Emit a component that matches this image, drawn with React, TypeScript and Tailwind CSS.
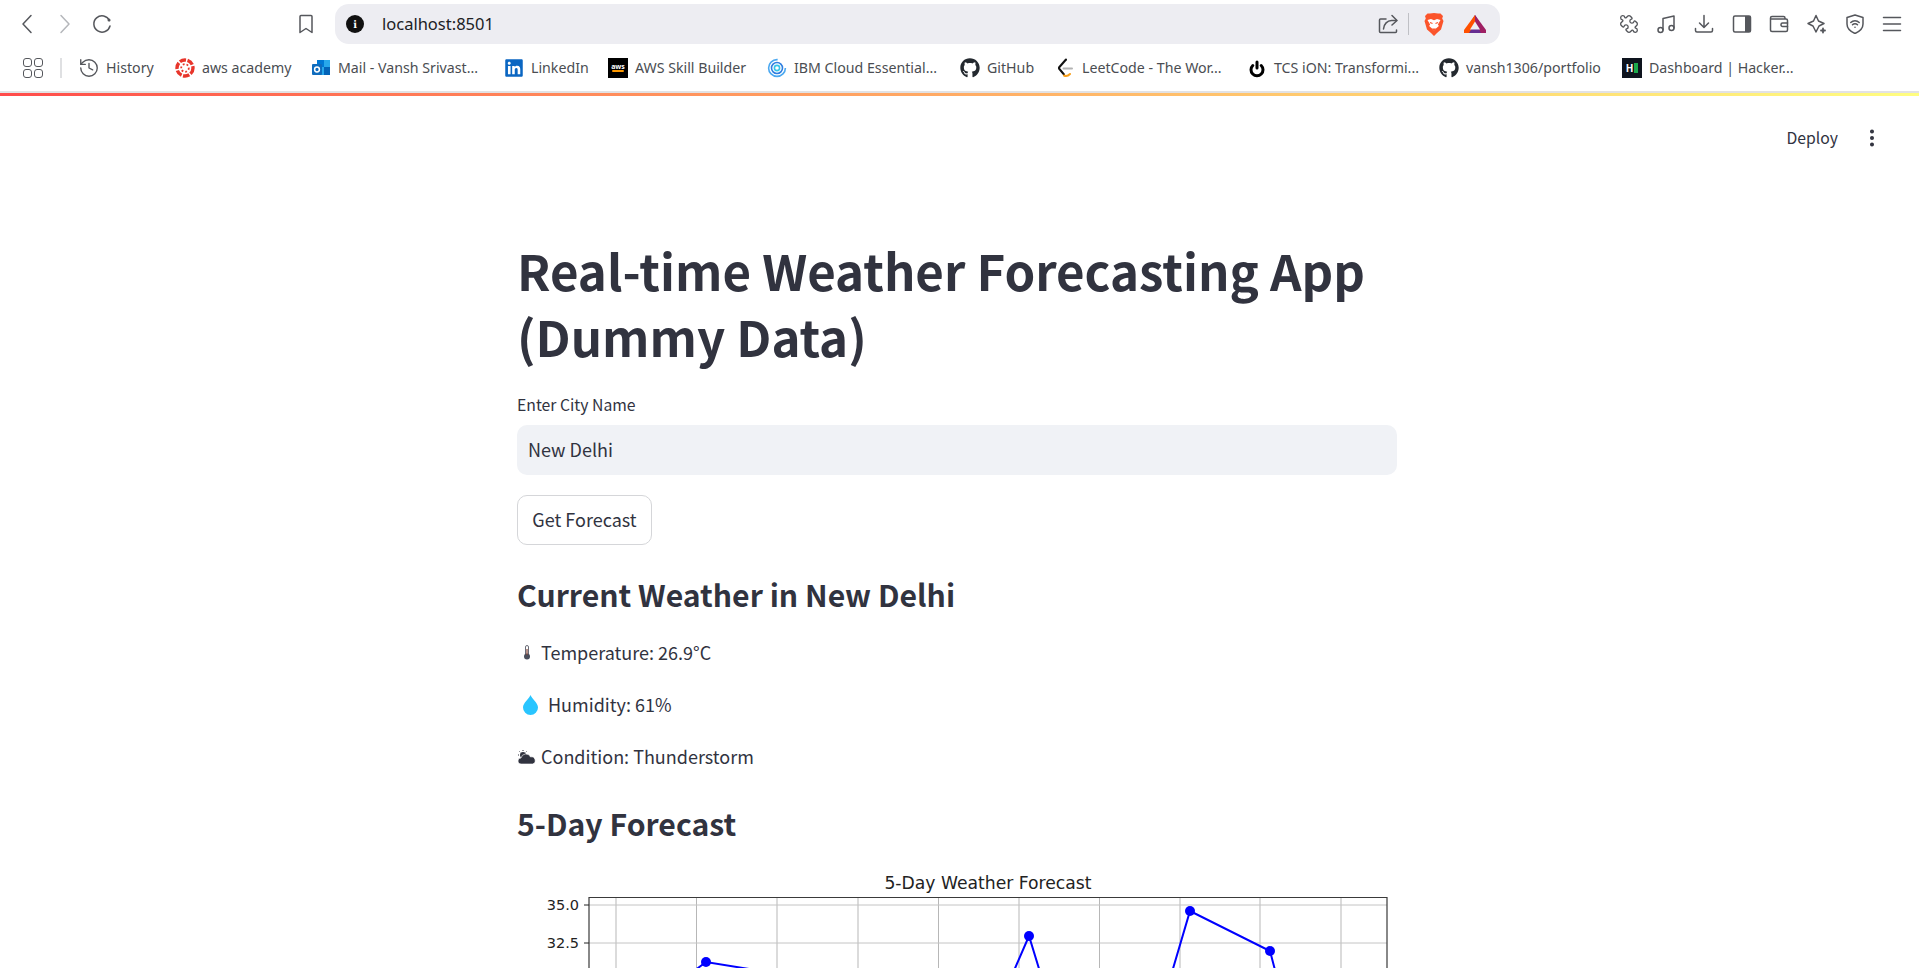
import { ReactNode } from "react";
import { EllipsisVertical, History, Puzzle } from "lucide-react";
import { FaGithub, FaLinkedin } from "react-icons/fa";

const chromeFont = "font-['Noto_Sans',sans-serif]";
const iconProps = { fill: "none", stroke: "currentColor", strokeWidth: 1.5, strokeLinecap: "round", strokeLinejoin: "round" } as const;

const BookmarkLink = ({ icon, label, width }: { icon: ReactNode; label: string; width: string }) => (
  <div className={`flex shrink-0 items-center gap-[7px] ${width}`}>
    <span className="flex h-5 w-5 shrink-0 items-center justify-center">{icon}</span>
    <span className="whitespace-nowrap text-[14.2px] text-[#4a4d52]">{label}</span>
  </div>
);

const AwsBox = () => (
  <span className="flex h-5 w-5 flex-col items-center justify-center bg-black text-[7px] font-bold leading-[8px] text-white">
    aws
    <span className="mt-[-1px] h-[2px] w-3 rounded-full bg-[#f90]" />
  </span>
);

const CanvasLogo = () => (
  <svg viewBox="0 0 20 20" className="h-5 w-5" fill="none" stroke="#e8352b">
    <circle cx="10" cy="10" r="8" strokeWidth="3.400" strokeDasharray="6.500 1.500" />
    <circle cx="10" cy="10" r="3.800" strokeWidth="1.800" strokeDasharray="1.800 2" />
  </svg>
);

const OutlookLogo = () => (
  <svg viewBox="0 0 20 20" className="h-5 w-5">
    <rect x="6" y="2" width="13" height="15" fill="#28a8ea" />
    <rect x="6" y="2" width="7" height="7" fill="#0078d4" />
    <rect x="13" y="9" width="6" height="8" fill="#0364b8" />
    <rect x="1" y="6" width="10" height="11" rx="1" fill="#0f6cbd" />
    <circle cx="6" cy="11.500" r="2.400" fill="none" stroke="#fff" strokeWidth="1.500" />
  </svg>
);

const IbmLogo = () => (
  <svg viewBox="0 0 20 20" className="h-5 w-5" fill="none" strokeWidth="1.600">
    <circle cx="10" cy="10" r="8.400" stroke="#4aa8f0" strokeDasharray="40 13" />
    <circle cx="10" cy="10" r="5.500" stroke="#2f7fe0" />
    <circle cx="10" cy="10" r="2.600" stroke="#36c5e8" />
  </svg>
);

const LeetCodeLogo = () => (
  <svg viewBox="0 0 20 20" className="h-5 w-5" fill="none" strokeWidth="2" strokeLinecap="round">
    <path d="M11 1.500 4 9.500" stroke="#111" />
    <path d="M4 10.500 9 16.500" stroke="#111" />
    <path d="M9 17.500c2 1 4 .5 6-1.500" stroke="#f89f1b" />
    <path d="M8.500 10.500H17" stroke="#b3b3b3" />
  </svg>
);

const PowerLogo = () => (
  <svg viewBox="0 0 20 20" className="h-5 w-5" fill="none" stroke="#000" strokeWidth="3" strokeLinecap="round">
    <path d="M5.800 7.500a6 6 0 1 0 8.400 0" />
    <path d="M10 4v6" />
  </svg>
);

const HackerRankLogo = () => (
  <span className="flex h-5 w-5 items-center justify-center gap-px bg-[#0e141e]">
    <span className="text-[10px] font-bold leading-none text-white">H</span>
    <span className="h-[10px] w-1 bg-[#1ba94c]" />
  </span>
);

const BraveLogo = () => (
  <svg viewBox="0 0 20 23" className="h-[23px] w-5">
    <path d="M10 0 6 .5 3.500 .5 1 3l.8 2.500L.5 8l2.500 8.500 4 3.500 3 3 3-3 4-3.500L19.500 8l-1.300-2.500L19 3 16.500 .5 14 .5z" fill="#fb542b" />
    <path d="M3.500 7 7 6l3 1.200L13 6l3.500 1-2.600 4.500 1 1.500-2.900 2.500-2 2-2-2L5.100 13l1-1.500z" fill="#fff" />
    <path d="M8 15.500h4L10 18z" fill="#fb542b" />
    <path d="M6 9.500l2.500 1M14 9.500l-2.500 1" stroke="#fb542b" strokeWidth="1.200" />
  </svg>
);

const RewardsLogo = () => (
  <svg viewBox="0 0 22 18" className="h-[18px] w-[22px]">
    <path d="M11 0 22 18H0z" fill="#662d91" />
    <path d="M11 0 22 15v3h-5L11 8z" fill="#9e1f63" />
    <path d="M11 0 0 15v3h5l6-10z" fill="#ff5000" />
    <path d="M11 6.500 16 14.500H6z" fill="#ededf2" />
  </svg>
);

const Thermometer = () => (
  <svg viewBox="0 0 8 15" className="h-[15px] w-2">
    <rect x="2.500" y=".5" width="3" height="10" rx="1.500" fill="none" stroke="#6b6d78" strokeWidth="1" />
    <circle cx="4" cy="11.500" r="3" fill="#4b4f5c" />
    <rect x="3.400" y="4" width="1.200" height="6" fill="#8a4a3a" />
  </svg>
);

const Droplet = () => (
  <svg viewBox="0 0 15 20" className="h-5 w-[15px]">
    <path d="M7.500 0c1.500 4 7.500 8 7.500 12.500a7.500 7.500 0 0 1-15 0C0 8 6 4 7.500 0z" fill="#29c5ff" />
  </svg>
);

const CloudSun = () => (
  <svg viewBox="0 0 19 14" className="h-[14px] w-[19px]" fill="#31333f">
    <circle cx="6" cy="5" r="3" />
    <path d="M6 0v1M1 5h1M2.500 1.500l.7.7M9.500 1.500l-.7.700M2.500 8.500l.7-.7" stroke="#31333f" strokeWidth="1" />
    <path d="M4 14a3 3 0 0 1 0-6 5 5 0 0 1 9.500-1A3.500 3.500 0 0 1 15.500 14z" stroke="#fff" strokeWidth="0.600" />
  </svg>
);

const ReloadIcon = () => (
  <svg viewBox="0 0 20 20" className="h-5 w-5" {...iconProps}>
    <path d="M17.500 6.500A8.200 8.200 0 1 0 18 12" />
    <circle cx="17" cy="6" r="1.500" fill="currentColor" stroke="none" />
  </svg>
);

const ShareIcon = () => (
  <svg viewBox="0 0 20 20" className="h-5 w-5" {...iconProps}>
    <path d="M8 5H2.500a1 1 0 0 0-1 1v11.500a1 1 0 0 0 1 1h15a1 1 0 0 0 1-1V16" />
    <path d="M5.500 15c.3-5 4-8.500 8-8.500h5" />
    <path d="M14 1.500 19 6.500 14 11" />
  </svg>
);

const MusicIcon = () => (
  <svg viewBox="0 0 20 20" className="h-5 w-5" {...iconProps}>
    <path d="M6 16V4.500L17 2v12" />
    <circle cx="3.500" cy="16" r="2.500" />
    <circle cx="14.500" cy="14" r="2.500" />
  </svg>
);

const DownloadIcon = () => (
  <svg viewBox="0 0 20 20" className="h-5 w-5" {...iconProps}>
    <path d="M10 1.500v11.500M5.500 9l4.500 4.500L14.500 9" />
    <path d="M1.500 14.500v2a1.500 1.500 0 0 0 1.500 1.500h14a1.500 1.500 0 0 0 1.500-1.500v-2" />
  </svg>
);

const PanelIcon = () => (
  <svg viewBox="0 0 20 20" className="h-5 w-5">
    <rect x="1.500" y="2" width="17" height="16" rx="1.500" fill="none" stroke="currentColor" strokeWidth="1.500" />
    <path d="M13 2h4a2 2 0 0 1 2 2v12a2 2 0 0 1-2 2h-4z" fill="currentColor" />
  </svg>
);

const WalletIcon = () => (
  <svg viewBox="0 0 20 20" className="h-5 w-5" {...iconProps}>
    <path d="M16 5V4a1.500 1.500 0 0 0-1.500-1.500H3A1.500 1.500 0 0 0 1.500 4v12A1.500 1.500 0 0 0 3 17.500h14a1.500 1.500 0 0 0 1.500-1.500V6.500A1.500 1.500 0 0 0 17 5H2" />
    <path d="M18.500 9h-5a1.500 1.500 0 0 0-1.500 1.500v.5a1.500 1.500 0 0 0 1.500 1.500h5" />
  </svg>
);

const SparkleIcon = () => (
  <svg viewBox="0 0 20 20" className="h-5 w-5" {...iconProps}>
    <path d="M9 1.500 11.500 7 17 9.500l-5 2.500-3 6-3-6-5-2.500L6.500 7z" />
    <path d="M16 14.500v4M14 16.500h4" strokeWidth="1.800" />
  </svg>
);

const ShieldWifiIcon = () => (
  <svg viewBox="0 0 20 20" className="h-5 w-5" {...iconProps}>
    <path d="M10 1 18 3.500V10c0 4.500-3.500 7.500-8 9.500C5.500 17.500 2 14.500 2 10V3.500z" />
    <path d="M5.800 8.500a6 6 0 0 1 8.400 0M7.500 10.800a3.500 3.500 0 0 1 5 0" />
    <circle cx="10" cy="13.200" r=".8" fill="currentColor" stroke="none" />
  </svg>
);

const MenuIcon = () => (
  <svg viewBox="0 0 20 20" className="h-5 w-5" {...iconProps}>
    <path d="M1.500 3.500h17M1.500 10h17M1.500 16.500h17" />
  </svg>
);

const gridX = [616, 696.5, 777, 858, 938.5, 1019, 1099.5, 1180, 1260, 1341];
const gridY = [905, 943];
const points = [
  [706, 962],
  [1029, 936],
  [1190, 911],
  [1270, 951],
];

// only the top of the matplotlib chart is on screen, the rest runs past the fold
const ForecastChart = () => (
  <svg viewBox="517 866 880 102" className="block h-[102px] w-[880px] shrink-0">
    {gridX.map((x) => (
      <line key={x} x1={x} x2={x} y1={897} y2={968} stroke="#b7b7b7" strokeWidth="1" />
    ))}
    {gridY.map((y) => (
      <line key={y} x1={589} x2={1387} y1={y} y2={y} stroke="#c4c4c4" strokeWidth="1" />
    ))}
    <path d="M589 968V897.500H1387V968" fill="none" stroke="#3a3a3a" strokeWidth="1.200" />
    {gridY.map((y) => (
      <line key={y} x1={584} x2={589} y1={y} y2={y} stroke="#222" strokeWidth="1" />
    ))}
    <text x="579" y="910" textAnchor="end" fontSize="14.500" fontFamily="DejaVu Sans" fill="#222">35.0</text>
    <text x="579" y="948" textAnchor="end" fontSize="14.500" fontFamily="DejaVu Sans" fill="#222">32.5</text>
    <text x="988" y="889" textAnchor="middle" fontSize="17.200" fontFamily="DejaVu Sans" fill="#222">5-Day Weather Forecast</text>
    <path
      d="M690 974 706 962 786 975M1006 989 1029 936 1044 985M1167 989 1190 911 1270 951 1280 989"
      fill="none"
      stroke="#0000ff"
      strokeWidth="2"
    />
    {points.map(([x, y]) => (
      <circle key={x} cx={x} cy={y} r="5" fill="#0000ff" />
    ))}
  </svg>
);

const Gradient = () => <div className="h-[3px] shrink-0 bg-gradient-to-r from-[#ff4b4b] to-[#fffd80]" />;

const BrowserBar = () => (
  <div className={`shrink-0 ${chromeFont}`}>
    <div className="flex h-12 items-center pl-[17px] text-[#55575c]">
      <svg viewBox="0 0 20 20" className="h-5 w-5" {...iconProps}>
        <path d="M14 1.500 6 10l8 8.500" />
      </svg>
      <svg viewBox="0 0 20 20" className="ml-[18px] h-5 w-5 text-[#b5b7bb]" {...iconProps}>
        <path d="M6 1.500 14 10l-8 8.500" />
      </svg>
      <span className="ml-[17px]"><ReloadIcon /></span>
      <svg viewBox="0 0 20 20" className="ml-[184px] h-5 w-5" {...iconProps}>
        <path d="M4 2.500A1 1 0 0 1 5 1.500h10a1 1 0 0 1 1 1v16l-6-4-6 4z" />
      </svg>
      <div className="ml-[19px] flex h-10 w-[1165px] items-center rounded-[14px] bg-[#ededf2] pl-[11px] pr-[14px]">
        <span className="flex h-[18px] w-[18px] items-center justify-center rounded-full bg-[#111] font-serif text-[12px] font-bold leading-none text-white">
          i
        </span>
        <span className="ml-[18px] text-[16.500px] text-[#202124]">localhost:8501</span>
        <span className="ml-auto"><ShareIcon /></span>
        <span className="ml-[10px] h-[22px] w-px bg-[#bfc0c5]" />
        <span className="ml-[15px] flex"><BraveLogo /></span>
        <span className="ml-[20px] flex"><RewardsLogo /></span>
      </div>
      <div className="ml-[119px] flex items-center gap-[17.600px]">
        <Puzzle size={20} strokeWidth={1.6} className="rotate-90" />
        <MusicIcon />
        <DownloadIcon />
        <PanelIcon />
        <WalletIcon />
        <SparkleIcon />
        <ShieldWifiIcon />
        <MenuIcon />
      </div>
    </div>
    <div className="flex h-[45px] items-center border-b-2 border-[#e2e2e4] pb-[3px] pl-[23px]">
      <span className="grid w-[20px] shrink-0 grid-cols-2 gap-[2px]">
        <span className="h-[9px] w-[9px] rounded-[3px] border-[1.5px] border-[#55575c]" />
        <span className="h-[9px] w-[9px] rounded-[3px] border-[1.5px] border-[#55575c]" />
        <span className="h-[9px] w-[9px] rounded-[3px] border-[1.5px] border-[#55575c]" />
        <span className="h-[9px] w-[9px] rounded-[3px] border-[1.5px] border-[#55575c]" />
      </span>
      <span className="ml-[17px] h-[20px] w-[2px] shrink-0 bg-[#dfe0e2]" />
      <div className="ml-[17px] flex">
        <BookmarkLink width="w-[96px]" icon={<History size={22} strokeWidth={1.5} className="shrink-0 text-[#55575c]" />} label="History" />
        <BookmarkLink width="w-[136px]" icon={<CanvasLogo />} label="aws academy" />
        <BookmarkLink width="w-[193px]" icon={<OutlookLogo />} label="Mail - Vansh Srivast..." />
        <BookmarkLink width="w-[104px]" icon={<FaLinkedin size={20} className="text-[#0a66c2]" />} label="LinkedIn" />
        <BookmarkLink width="w-[159px]" icon={<AwsBox />} label="AWS Skill Builder" />
        <BookmarkLink width="w-[193px]" icon={<IbmLogo />} label="IBM Cloud Essential..." />
        <BookmarkLink width="w-[95px]" icon={<FaGithub size={20} className="text-[#24292f]" />} label="GitHub" />
        <BookmarkLink width="w-[192px]" icon={<LeetCodeLogo />} label="LeetCode - The Wor..." />
        <BookmarkLink width="w-[192px]" icon={<PowerLogo />} label="TCS iON: Transformi..." />
        <BookmarkLink width="w-[183px]" icon={<FaGithub size={20} className="text-[#24292f]" />} label="vansh1306/portfolio" />
        <BookmarkLink width="w-[170px]" icon={<HackerRankLogo />} label="Dashboard | Hacker..." />
      </div>
    </div>
  </div>
);

export default function App() {
  return (
    <div className="flex h-[968px] w-[1919px] flex-col overflow-hidden bg-white font-['Noto_Sans_CJK_SC','Noto_Sans',sans-serif] text-[#31333f]">
      <BrowserBar />
      <Gradient />
      <div className="flex shrink-0 items-center justify-end pr-[36px] pt-[30px]">
        <span className="text-[15.750px]">Deploy</span>
        <EllipsisVertical size={22} strokeWidth={2.4} className="ml-[23px]" />
      </div>
      <main className="flex flex-col pl-[517px] pt-[87px]">
        <div className="w-[880px]">
          <h1 className="text-[49.200px] font-bold leading-[66px]">
            Real-time Weather Forecasting App
            <br />
            (Dummy Data)
          </h1>
          <label className="mt-[26px] block text-[15.750px] leading-[20px]">Enter City Name</label>
          <div className="mt-[10px] flex h-[50px] items-center rounded-[10px] bg-[#f0f2f6] px-[11px] text-[18px]">New Delhi</div>
          <button className="mt-5 block h-[50px] w-[135px] rounded-[10px] border border-[#d5d6d9] bg-white text-[18px]">
            Get Forecast
          </button>
          <h2 className="mt-[28px] text-[30.200px] font-semibold leading-[42px]">Current Weather in New Delhi</h2>
          <p className="mt-[22px] flex h-8 items-center text-[18px]">
            <span className="ml-[6px] mr-[10px] flex"><Thermometer /></span>Temperature: 26.9°C
          </p>
          <p className="mt-5 flex h-8 items-center text-[18px]">
            <span className="ml-[6px] mr-[10px] flex"><Droplet /></span>Humidity: 61%
          </p>
          <p className="mt-5 flex h-8 items-center text-[18px]">
            <span className="mr-[5px] flex"><CloudSun /></span>Condition: Thunderstorm
          </p>
          <h2 className="mt-[29px] text-[30.200px] font-semibold leading-[42px]">5-Day Forecast</h2>
          <div className="mt-[22px]">
            <ForecastChart />
          </div>
        </div>
      </main>
    </div>
  );
}
